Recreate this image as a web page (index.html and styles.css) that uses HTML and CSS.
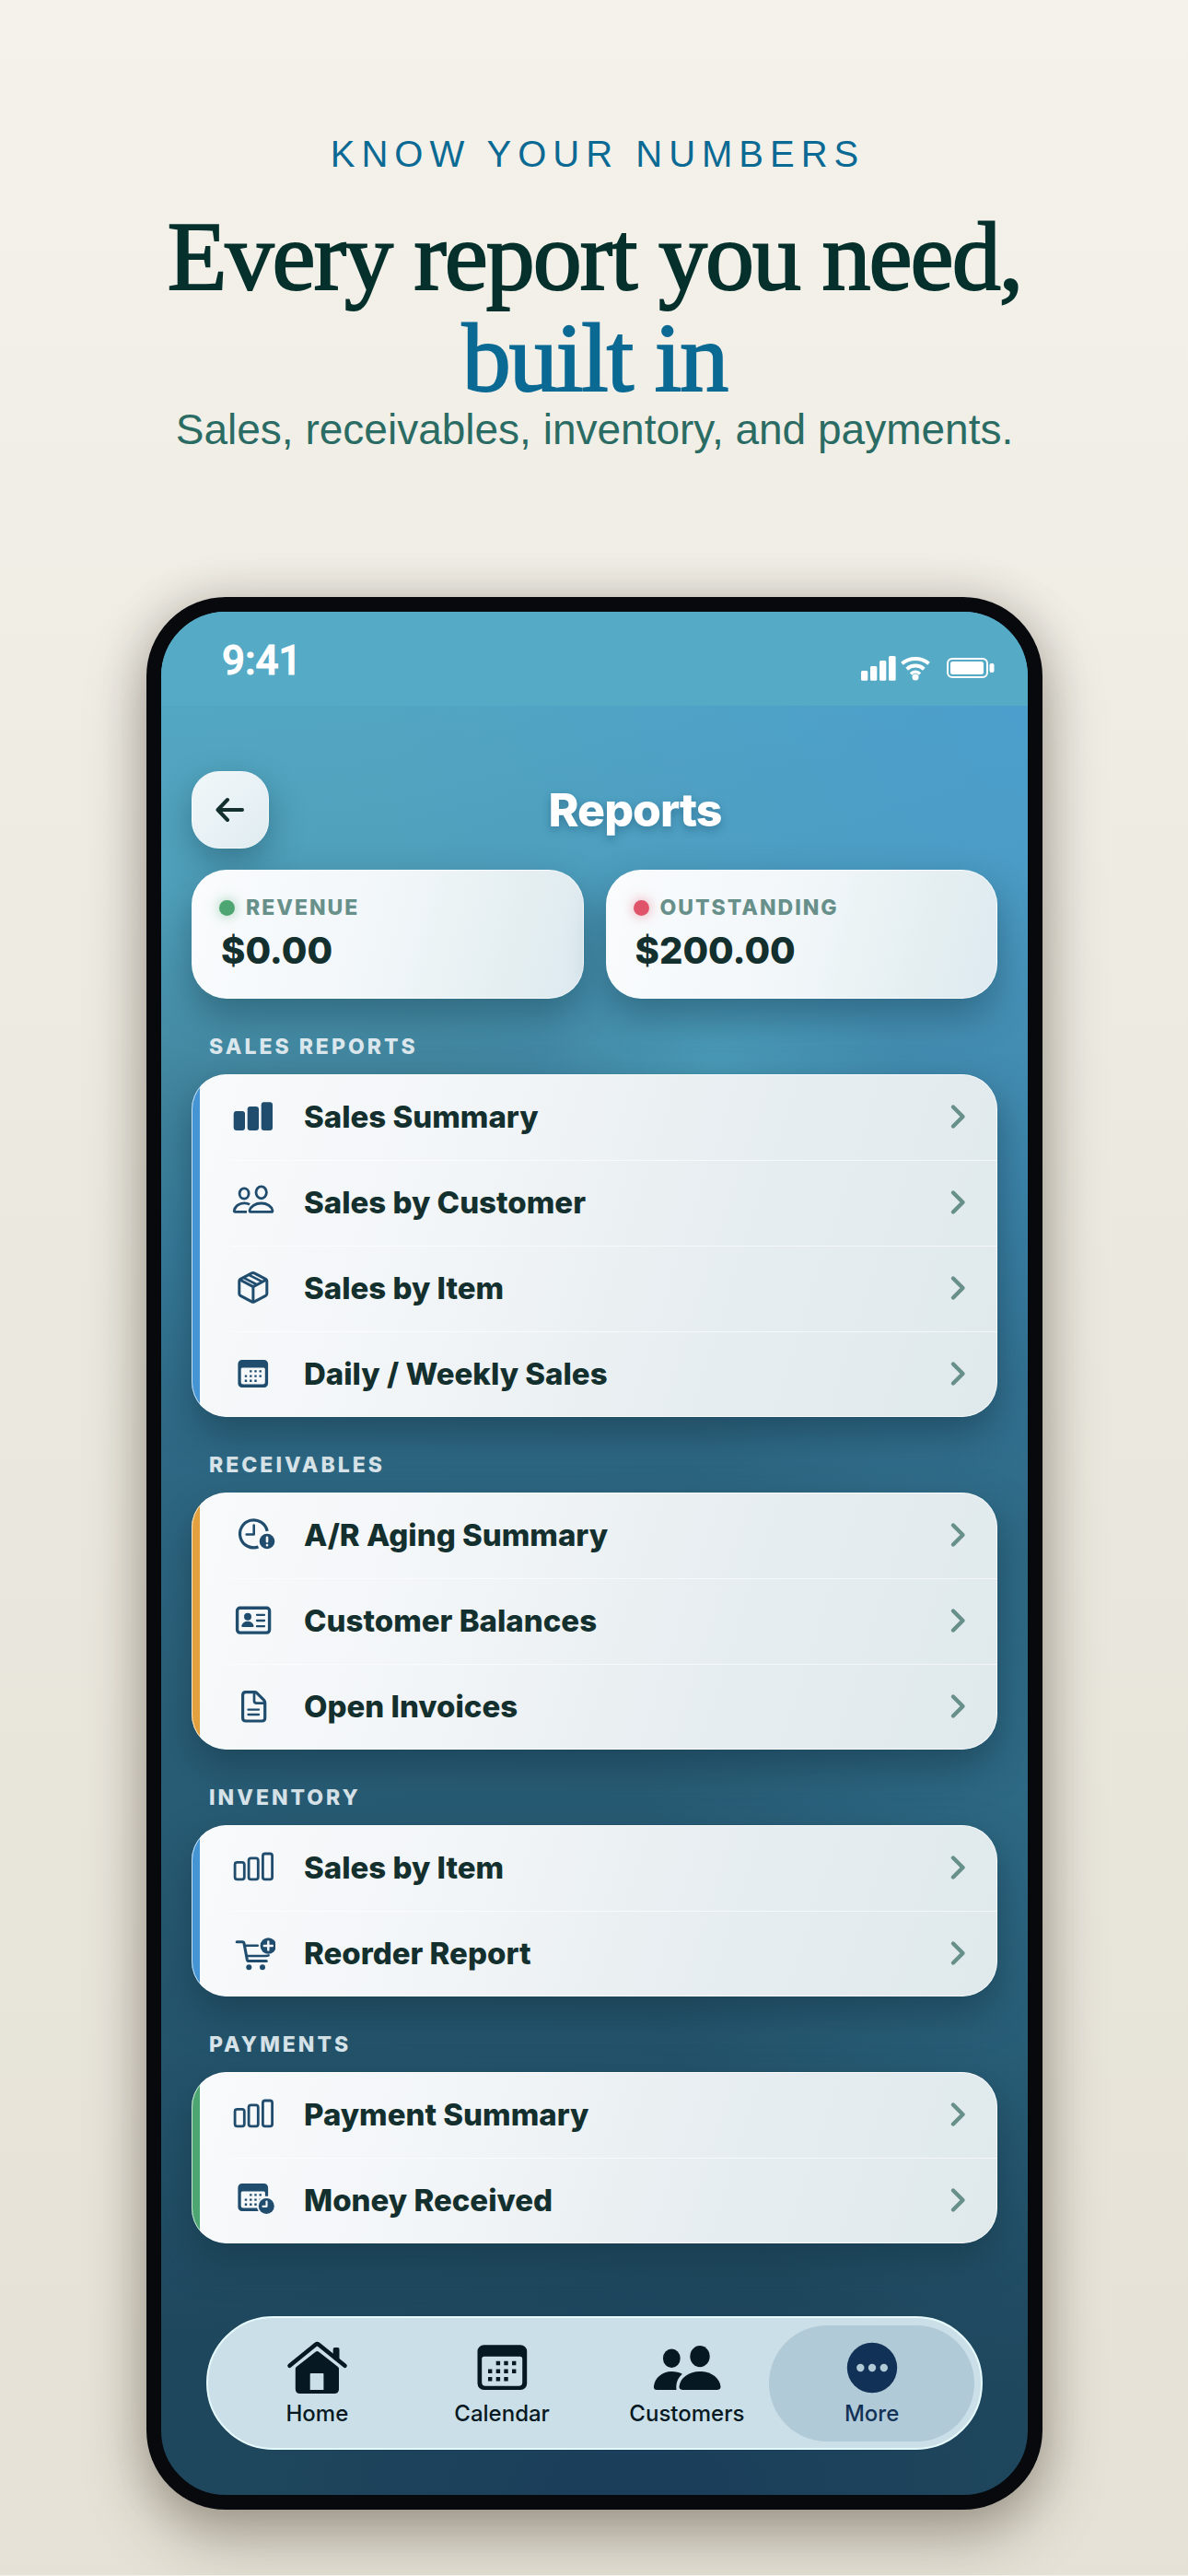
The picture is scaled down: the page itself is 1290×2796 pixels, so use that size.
FILE: index.html
```html
<!DOCTYPE html>
<html lang="en">
<head>
<meta charset="utf-8">
<meta name="viewport" content="width=device-width, initial-scale=1">
<title>Reports</title>
<link rel="stylesheet" href="styles.css">
</head>
<body>
<svg class="sprite" aria-hidden="true">
  <symbol id="bars-fill" viewBox="0 0 48 40"><g fill="currentColor"><rect x="2.700" y="14" width="12.300" height="21" rx="3"/><rect x="17.700" y="9" width="12.300" height="26" rx="3"/><rect x="32.700" y="4.200" width="12.300" height="30.800" rx="3"/></g></symbol>
  <symbol id="bars" viewBox="0 0 48 40"><g fill="none" stroke="currentColor" stroke-width="2.800"><rect x="4.100" y="14.300" width="10.200" height="18.600" rx="2.400"/><rect x="19.100" y="9.800" width="10.200" height="23.100" rx="2.400"/><rect x="34.400" y="5" width="10.200" height="27.900" rx="2.400"/></g></symbol>
  <symbol id="people" viewBox="0 0 48 40"><g fill="none" stroke="currentColor" stroke-width="2.800" stroke-linejoin="round"><ellipse cx="14.100" cy="10.500" rx="5" ry="5.600"/><ellipse cx="32.700" cy="9.300" rx="5.700" ry="6.500"/><path d="M21 30.400c-.8 0-1.200-.7-.9-1.700 1.200-4.400 6.300-7.700 12.600-7.700s11.200 3.300 12.200 7.700c.2 1-.2 1.700-1 1.700z"/><path d="M17 30.400H4.500c-1 0-1.500-.6-1.200-1.600C4.300 24.500 8.600 20.800 14 20.800c2.400 0 4.500.5 6.100 1.600"/></g></symbol>
  <symbol id="box" viewBox="0 0 48 40"><g fill="none" stroke="currentColor" stroke-width="3" stroke-linejoin="round"><path d="M22.400 3.800 10 10.300q-1.200.7-1.200 2v13.900q0 1.500 1.300 2.200L22.400 34.800q1.400.7 2.800 0L37.500 28.400q1.300-.7 1.300-2.200V12.300q0-1.300-1.200-2L25.200 3.800q-1.400-.7-2.800 0z"/><path d="m9.400 11 14.500 7.600L38.300 11M23.900 18.600V35"/><path d="m13.500 8.900 14.800 7.600M19.400 5.800l14.800 7.600" stroke-width="2.600"/></g></symbol>
  <symbol id="calendar" viewBox="0 0 48 40"><path fill="currentColor" fill-rule="evenodd" d="M11.800 5h23.900a4.400 4.400 0 0 1 4.400 4.400v21.200a4.400 4.400 0 0 1-4.400 4.400H11.800a4.400 4.400 0 0 1-4.400-4.400V9.400A4.400 4.400 0 0 1 11.800 5zm.4 8.500a1.500 1.500 0 0 0-1.500 1.500v14a2.500 2.500 0 0 0 2.500 2.500h21.100a2.500 2.500 0 0 0 2.500-2.500v-14a1.500 1.500 0 0 0-1.500-1.500z"/><path stroke="currentColor" stroke-width="2.400" d="M20.100 17.400h2.400m2.800 0h2.400m2.800 0h2.400M14.800 22.600h2.400m2.900 0h2.400m2.800 0h2.400m2.800 0h2.400M14.800 27.700h2.400m2.900 0h2.400m2.800 0h2.400"/></symbol>
  <symbol id="clock-alert" viewBox="0 0 48 40"><g fill="none" stroke="currentColor"><path stroke-width="3.200" d="M39.200 15.800A15 15 0 1 0 29.500 33"/><path stroke-width="2.600" stroke-linecap="round" stroke-linejoin="round" d="M24.700 9.500v10h-8"/></g><circle cx="39" cy="27" r="8.300" fill="currentColor"/><path stroke="#f4f7f9" stroke-width="2.600" stroke-linecap="round" d="M39 22.800v4.400M39 31v.2"/></symbol>
  <symbol id="id-card" viewBox="0 0 48 40"><rect x="6.600" y="6.300" width="35" height="26.800" rx="3" fill="none" stroke="currentColor" stroke-width="3.400"/><g fill="currentColor"><circle cx="18" cy="15.700" r="4"/><path d="M11.300 25.500c.8-3 3.500-4.700 6.700-4.700s5.700 1.700 6.500 4.700q.2 1.400-1 1.400H12.300q-1.200 0-1-1.400z"/></g><path stroke="currentColor" stroke-width="2.300" stroke-linecap="round" d="M28 13.800h8M28 20h8M28 26.200h8"/></symbol>
  <symbol id="doc" viewBox="0 0 48 40"><g fill="none" stroke="currentColor" stroke-width="3.200" stroke-linejoin="round"><path d="M15.800 4.600h9.600q1.500 0 2.500 1l7.500 7.600q1.300 1.300 1.300 3v16.600q0 3.200-3.200 3.200H15.800q-3.200 0-3.200-3.200V7.800q0-3.200 3.200-3.200z"/><path d="M25 5v9q0 2.700 2.700 2.700h8.700" stroke-width="2.700"/></g><path stroke="currentColor" stroke-width="2.300" stroke-linecap="round" d="M18.500 23.700H30M18.500 29H30"/></symbol>
  <symbol id="cart-add" viewBox="0 0 48 40"><g fill="none" stroke="currentColor" stroke-linecap="round" stroke-linejoin="round"><path stroke-width="3.100" d="M6.200 7.800h6q1.500 0 1.800 1.500l3.300 17.500q.4 1.700 2 1.700h19"/><path stroke-width="2.500" d="M15.500 11.700h13.300M17 22.900h20.500q2 0 3.200-.6"/></g><g fill="currentColor"><circle cx="19.300" cy="35.200" r="3"/><circle cx="34" cy="35.200" r="3"/><circle cx="40.300" cy="12" r="8.700"/></g><path stroke="#f4f7f9" stroke-width="2.400" stroke-linecap="round" d="M35.800 12h9M40.300 7.500v9"/></symbol>
  <symbol id="calendar-clock" viewBox="0 0 48 40"><path fill="currentColor" d="M11.800 2h23.900a4.400 4.400 0 0 1 4.400 4.400v9.300l-3.200.1V12a1.500 1.500 0 0 0-1.500-1.500H12.200a1.500 1.500 0 0 0-1.500 1.500v14a2.500 2.500 0 0 0 2.500 2.500h15.200l1.400 3.500h-18a4.400 4.400 0 0 1-4.400-4.400V6.400A4.400 4.400 0 0 1 11.800 2z"/><path stroke="currentColor" stroke-width="2.400" d="M20.100 14.400h2.400m2.800 0h2.400m2.800 0h2.400M14.800 19.600h2.400m2.900 0h2.400m2.800 0h2.400m2.800 0h2.400M14.800 24.700h2.400m2.900 0h2.400m2.800 0h2.400"/><circle cx="38.300" cy="26.400" r="10.300" fill="#f4f7f9"/><circle cx="38.300" cy="26.400" r="8.500" fill="currentColor"/><path fill="none" stroke="#f4f7f9" stroke-width="2.200" stroke-linecap="round" stroke-linejoin="round" d="M38.500 21.500v5.300h-4"/></symbol>
  <symbol id="chevron" viewBox="0 0 20 30"><path d="m4 4.500 10.500 10.500L4 25.500" fill="none" stroke="currentColor" stroke-width="4.400" stroke-linecap="round" stroke-linejoin="round"/></symbol>
</svg>

<main class="page">
  <header class="intro">
    <p class="eyebrow">KNOW YOUR NUMBERS</p>
    <h1 class="headline">Every report you need, <span class="headline-accent">built in</span></h1>
    <p class="subhead">Sales, receivables, inventory, and payments.</p>
  </header>

  <div class="phone">
    <div class="status">
      <span class="time">9:41</span>
      <span class="status-icons">
        <svg width="38" height="27" viewBox="0 0 38 27" fill="#fff"><rect y="16" width="7.300" height="10.800" rx="1.500"/><rect x="10" y="11" width="7.300" height="15.800" rx="1.500"/><rect x="20" y="5" width="7.300" height="21.800" rx="1.500"/><rect x="30" width="7.600" height="26.800" rx="1.500"/></svg>
        <svg class="wifi" width="32" height="28" viewBox="0 0 32 28" fill="none" stroke="#fff" stroke-width="3.900"><path d="M1.400 9.300C9.500 2.300 22.500 2.300 30.600 9.300"/><path d="M6.700 15.200C12 10.300 20 10.300 25.300 15.200"/><path stroke-width="3.400" d="M11 20.500C14 17.300 18 17.300 21 20.500"/><circle cx="16" cy="24" r="3.500" fill="#fff" stroke="none"/></svg>
        <svg class="battery" width="52" height="22" viewBox="0 0 52 22"><rect x="1" y="1" width="43" height="20" rx="5" fill="none" stroke="#fff" stroke-width="2"/><rect x="4" y="4" width="36" height="14" rx="2.500" fill="#fff"/><rect x="46.500" y="6" width="5" height="10" rx="2" fill="#fff"/></svg>
      </span>
    </div>

    <div class="screen">
      <div class="titlebar">
        <button class="back" type="button" aria-label="Back">
          <svg width="36" height="36" viewBox="0 0 36 36" fill="none" stroke="currentColor" stroke-width="4" stroke-linecap="round" stroke-linejoin="round"><path d="M31 18H4.500M15 7 4.500 18 15 29"/></svg>
        </button>
        <h2 class="title">Reports</h2>
      </div>

      <div class="stats">
        <div class="stat">
          <p class="stat-label"><i class="dot dot-green"></i>REVENUE</p>
          <p class="stat-value">$0.00</p>
        </div>
        <div class="stat">
          <p class="stat-label"><i class="dot dot-red"></i>OUTSTANDING</p>
          <p class="stat-value">$200.00</p>
        </div>
      </div>

      <section>
        <h3 class="section-label">SALES REPORTS</h3>
        <div class="list blue">
          <a class="row" href="#"><svg class="icon"><use href="#bars-fill"/></svg><span class="name">Sales Summary</span><svg class="chev"><use href="#chevron"/></svg></a>
          <a class="row" href="#"><svg class="icon"><use href="#people"/></svg><span class="name">Sales by Customer</span><svg class="chev"><use href="#chevron"/></svg></a>
          <a class="row" href="#"><svg class="icon"><use href="#box"/></svg><span class="name">Sales by Item</span><svg class="chev"><use href="#chevron"/></svg></a>
          <a class="row" href="#"><svg class="icon"><use href="#calendar"/></svg><span class="name">Daily / Weekly Sales</span><svg class="chev"><use href="#chevron"/></svg></a>
        </div>
      </section>

      <section>
        <h3 class="section-label">RECEIVABLES</h3>
        <div class="list orange">
          <a class="row" href="#"><svg class="icon"><use href="#clock-alert"/></svg><span class="name">A/R Aging Summary</span><svg class="chev"><use href="#chevron"/></svg></a>
          <a class="row" href="#"><svg class="icon"><use href="#id-card"/></svg><span class="name">Customer Balances</span><svg class="chev"><use href="#chevron"/></svg></a>
          <a class="row" href="#"><svg class="icon"><use href="#doc"/></svg><span class="name">Open Invoices</span><svg class="chev"><use href="#chevron"/></svg></a>
        </div>
      </section>

      <section>
        <h3 class="section-label">INVENTORY</h3>
        <div class="list blue">
          <a class="row" href="#"><svg class="icon"><use href="#bars"/></svg><span class="name">Sales by Item</span><svg class="chev"><use href="#chevron"/></svg></a>
          <a class="row" href="#"><svg class="icon"><use href="#cart-add"/></svg><span class="name">Reorder Report</span><svg class="chev"><use href="#chevron"/></svg></a>
        </div>
      </section>

      <section>
        <h3 class="section-label">PAYMENTS</h3>
        <div class="list green">
          <a class="row" href="#"><svg class="icon"><use href="#bars"/></svg><span class="name">Payment Summary</span><svg class="chev"><use href="#chevron"/></svg></a>
          <a class="row" href="#"><svg class="icon"><use href="#calendar-clock"/></svg><span class="name">Money Received</span><svg class="chev"><use href="#chevron"/></svg></a>
        </div>
      </section>

      <nav class="tabs" aria-label="Main">
        <a class="tab" href="#">
          <svg class="tab-icon" viewBox="0 0 76 60"><path fill="none" stroke="currentColor" stroke-width="4.600" stroke-linecap="round" stroke-linejoin="round" d="M8.500 27.700 36.800 4.800q1.600-1.200 3.200 0L68.500 27.700"/><path fill="currentColor" d="M55.700 20V9.800q0-1.800 1.800-1.800h3.200q1.800 0 1.800 1.800V25z"/><path fill="currentColor" fill-rule="evenodd" d="M14.800 31q0-1.300 1-2.100L36.600 12.700q1.800-1.400 3.600 0L61 28.900q1 .8 1 2.100v22q0 5-5 5H19.800q-5 0-5-5zM31.500 36q-.8 0-.8.8V54h14.700V36.800q0-.8-.8-.8z"/></svg>
          <span>Home</span>
        </a>
        <a class="tab" href="#">
          <svg class="tab-icon" viewBox="0 0 76 60"><path fill="currentColor" fill-rule="evenodd" d="M18.500 5.300h39.700a7 7 0 0 1 7 7V47a7 7 0 0 1-7 7H18.500a7 7 0 0 1-7-7V12.300a7 7 0 0 1 7-7zm.2 12.400a2.500 2.500 0 0 0-2.500 2.500v25.500a4 4 0 0 0 4 4h36a4 4 0 0 0 4-4V20.200a2.500 2.500 0 0 0-2.500-2.500z"/><path stroke="currentColor" stroke-width="4.400" d="M31.700 25h4.400m4.200 0h4.400m4.300 0h4.400M23 33.700h4.400m4.300 0h4.400m4.200 0h4.400m4.300 0h4.400M23 42.300h4.400m4.300 0h4.400m4.200 0h4.400"/></svg>
          <span>Calendar</span>
        </a>
        <a class="tab" href="#">
          <svg class="tab-icon" viewBox="0 0 76 60"><g fill="currentColor"><ellipse cx="21.300" cy="19.800" rx="9.400" ry="10.200"/><ellipse cx="52" cy="17.600" rx="10.700" ry="11.600"/><path d="M33 53.900q-3.600 0-3.500-3.500C30.500 41 40 34 52 34s21.500 7 22.500 16.400q.1 3.500-3.500 3.500z"/><path d="M26.500 53.900H5.300q-3.500 0-3.400-3.500C2.900 41 11 34 21.300 34c4.200 0 8.300 1 11.600 2.800-4.500 4-7.200 9-6.400 17.100z"/></g></svg>
          <span>Customers</span>
        </a>
        <a class="tab active" href="#" aria-current="page">
          <svg class="tab-icon" viewBox="0 0 76 60"><circle cx="38" cy="30" r="27.200" fill="currentColor"/><g fill="#b1cad7"><circle cx="25.300" cy="30" r="4.200"/><circle cx="38" cy="30" r="4.200"/><circle cx="50.800" cy="30" r="4.200"/></g></svg>
          <span>More</span>
        </a>
      </nav>
    </div>
  </div>
</main>
</body>
</html>
```
FILE: styles.css
```css
* { box-sizing: border-box; }

body {
  margin: 0;
  font-family: Inter, "Liberation Sans", sans-serif;
  background: linear-gradient(180deg, #f5f2eb 0%, #ebe8df 50%, #e5e1d6 100%);
}

h1, h2, h3, p { margin: 0; }
a { color: inherit; text-decoration: none; }
.sprite { display: none; }

.page { padding: 143px 158px 71px 159px; }

/* Headline block */
.intro { text-align: center; font-family: "Liberation Sans", Arial, sans-serif; }
.eyebrow {
  padding-left: 7px;
  font-size: 40px;
  line-height: 48px;
  letter-spacing: 7px;
  color: #0b6a94;
}
.headline {
  margin-top: 33px;
  font-family: "Liberation Serif", "Times New Roman", serif;
  font-weight: 400;
  font-size: 106px;
  line-height: 110px;
  letter-spacing: -2px;
  color: #05302c;
  -webkit-text-stroke: 2px currentColor;
}
.headline-accent { display: block; color: #0b6a94; }
.subhead { font-size: 46px; line-height: 44px; color: #2a6c64; }

/* Phone */
.phone {
  margin-top: 160px;
  border: 16px solid #07090d;
  border-radius: 86px;
  overflow: hidden;
  background:
    radial-gradient(200px 110px at 64% 24%, rgba(80, 170, 195, .5), transparent),
    radial-gradient(700px 900px at 100% 6%, rgba(72, 155, 212, .6), transparent),
    radial-gradient(420px 700px at 100% 62%, rgba(52, 120, 150, .5), transparent),
    radial-gradient(420px 260px at 55% 100%, rgba(24, 56, 88, .6), transparent),
    linear-gradient(176deg, #55aac6 0%, #4f9fba 15%, #42869f 24%, #367a98 33%, #2e6884 43%, #2a6079 55%, #265870 68%, #225067 80%, #1e465c 90%, #1e465c 100%);
  box-shadow: 0 30px 64px rgba(60, 50, 35, .36), 0 0 50px rgba(60, 50, 35, .2);
}
.status {
  display: flex;
  justify-content: space-between;
  align-items: center;
  height: 102px;
  padding: 0 36px 0 66px;
  background: #55aac6;
  color: #fff;
}
.time { padding-top: 4px; font: 500 44px/52px Roboto, sans-serif; -webkit-text-stroke: 1px currentColor; }
.status-icons { display: flex; align-items: center; padding-top: 20px; }
.wifi { margin-left: 5px; }
.battery { margin-left: 18px; }

.screen { padding: 71px 33px 49px; }

.titlebar { display: flex; align-items: center; gap: 4px; height: 84px; }
.back {
  display: grid;
  place-items: center;
  width: 84px;
  height: 84px;
  padding: 0;
  border: 1px solid #f6fafb;
  border-radius: 30px;
  background: linear-gradient(135deg, #f1f7f9, #e0ecf1);
  color: #14302e;
  box-shadow: 0 14px 36px rgba(20, 60, 75, .4);
}
.title {
  flex: 1;
  text-align: center;
  font-size: 50px;
  line-height: 60px;
  font-weight: 800;
  letter-spacing: -1px;
  color: #fff;
  text-shadow: 0 4px 10px rgba(15, 60, 90, .35);
}

.stats { display: grid; grid-template-columns: 1fr 1fr; gap: 24px; margin-top: 23px; }
.stat {
  height: 140px;
  padding: 25px 31px;
  border: 1px solid rgba(255, 255, 255, .7);
  border-radius: 38px;
  background: linear-gradient(105deg, #fafcfd 0%, #f1f6f9 50%, #e5eff1 78%, #deeaf1 100%);
  box-shadow: 0 18px 40px rgba(20, 55, 70, .42);
}
.stat-label {
  display: flex;
  align-items: center;
  gap: 12px;
  font-size: 23px;
  line-height: 30px;
  font-weight: 800;
  letter-spacing: 2px;
  color: #68908a;
}
.dot { width: 17px; height: 17px; margin-left: -2px; border-radius: 50%; }
.dot-green { background: #4da671; box-shadow: 0 0 14px rgba(77, 166, 113, .55); }
.dot-red { background: #e0546b; box-shadow: 0 0 14px rgba(224, 84, 107, .55); }
.stat-value { margin-top: 8px; font-size: 40px; line-height: 48px; font-weight: 800; color: #14302e; }

.section-label {
  padding: 37px 19px 15px;
  font-size: 23px;
  line-height: 30px;
  font-weight: 800;
  letter-spacing: 3px;
  color: #dbe7ec;
}
.list {
  position: relative;
  overflow: hidden;
  border-radius: 38px;
  background: linear-gradient(108deg, #f8fafb 0%, #f3f6f8 30%, #e8eef1 60%, #dfe9ec 100%);
  box-shadow: 0 18px 40px rgba(20, 50, 65, .5);
}
/* Coloured strip down the left edge, then a hairline rim above it */
.list::before {
  content: "";
  position: absolute;
  inset: 0 auto 0 0;
  width: 9px;
  background: var(--accent);
}
.list::after {
  content: "";
  position: absolute;
  inset: 0;
  border: 1px solid rgba(255, 255, 255, .7);
  border-radius: inherit;
  pointer-events: none;
}
.blue { --accent: #4594d4; }
.orange { --accent: #e3a03f; }
.green { --accent: #4da671; }

.row {
  display: flex;
  align-items: center;
  height: 93px;
  margin-left: 43px;
  padding: 0 32px 2px 0;
}
.row + .row { border-top: 1px solid rgba(255, 255, 255, .6); }
.icon { flex: none; width: 48px; height: 40px; color: #204d6e; }
.name { flex: 1; margin-left: 31px; font-size: 33px; line-height: 40px; font-weight: 800; color: #14302e; }
.chev { flex: none; width: 20px; height: 30px; color: #68908a; }

/* Tab bar */
.tabs {
  display: grid;
  grid-template-columns: repeat(4, 1fr);
  align-items: center;
  height: 145px;
  margin: 79px 16px 0;
  padding: 0 18px;
  border: 2px solid #e6fafd;
  border-radius: 73px;
  background: #cbdfe8;
}
.tab {
  display: flex;
  flex-direction: column;
  align-items: center;
  justify-content: center;
  gap: 6px;
  height: 126px;
  margin: 0 -11px;
  border-radius: 63px;
  font-size: 24px;
  line-height: 28px;
  font-weight: 500;
  color: #061922;
}
.tab-icon { width: 76px; height: 60px; }
.active { background: #b1cad7; color: #123157; }
```
